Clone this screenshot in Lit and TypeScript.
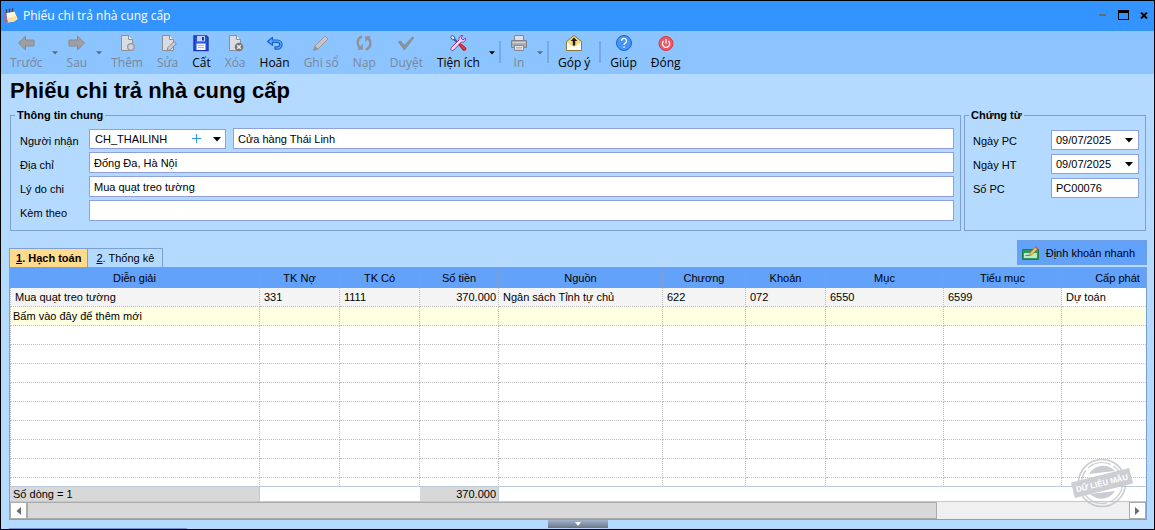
import { LitElement, html, svg, css, nothing, TemplateResult } from "lit";
import { customElement, state } from "lit/decorators.js";
import { classMap } from "lit/directives/class-map.js";

const icons: Record<string, TemplateResult> = {
  back: svg`<path d="M1.500 9 8.500 2V6H17v6H8.500v4z" fill="#9f9fa2" stroke="#898a8f"/>`,
  next: svg`<path d="M16.500 9 9.500 2V6H1v6H9.500v4z" fill="#9f9fa2" stroke="#898a8f"/>`,
  add: svg`<path d="M3.500 1.500h7l4 4v11h-11z" fill="#d9dde3" stroke="#8c8f94"/><path d="M10.500 1.500v4h4" fill="#eef0f3" stroke="#8c8f94"/><circle cx="13" cy="13" r="3.300" fill="#cfd2d6" stroke="#94979c" stroke-width="1.300"/>`,
  edit: svg`<path d="M3.500 1.500h7l4 4v11h-11z" fill="#d9dde3" stroke="#8c8f94"/><path d="M10.500 1.500v4h4" fill="#eef0f3" stroke="#8c8f94"/><path d="m8 17 1-3.500 6-6 2.300 2.300-6 6z" fill="#c9ccd1" stroke="#85888e"/>`,
  save: svg`<path d="M2 2h12.500l1.500 1.500v13H2z" fill="#2452e6" stroke="#1a37b0" stroke-width="1.400"/><path d="M5 2h8v5.500H5z" fill="#c3cdf0"/><path d="M10 3h2v3.500h-2z" fill="#1b38a8"/><path d="M4.500 9.500h9V16h-9z" fill="#f4f5fb"/><path d="M6 11.500h6M6 13.500h6" stroke="#b1b8d4"/>`,
  remove: svg`<path d="M3.500 1.500h7l4 4v11h-11z" fill="#d9dde3" stroke="#8c8f94"/><path d="M10.500 1.500v4h4" fill="#eef0f3" stroke="#8c8f94"/><circle cx="13" cy="13" r="4.300" fill="#77797e"/><path d="m11.200 11.200 3.600 3.600m0-3.600-3.600 3.600" stroke="#eee" stroke-width="1.500"/>`,
  undo: svg`<path d="M1.500 7.500 6.500 3.500v2.500h5a4.600 4.600 0 0 1 0 9.200H9v-2.400h2.500a2.200 2.200 0 0 0 0-4.400h-5v3z" fill="#60a9fb" stroke="#1762cd" stroke-width="1.200" stroke-linejoin="round"/>`,
  pencil: svg`<path d="M1.500 16.500 3 12 13 2l3 3L6 15z" fill="#c3c6ca" stroke="#96999e"/><path d="m1.500 16.500 1.500-4.500 3 3z" fill="#8c8f94"/>`,
  reload: svg`<path d="M7.200 2.500C4 3.500 2.500 6 2.700 9.200c.1 2 .8 3.500 2.300 4.800" fill="none" stroke="#8f9297" stroke-width="2.400"/><path d="M2 15.800h5.800V10z" fill="#8f9297"/><path d="M10.800 15.500c3.200-1 4.700-3.500 4.500-6.700-.1-2-.8-3.500-2.300-4.800" fill="none" stroke="#8f9297" stroke-width="2.400"/><path d="M16 2.200h-5.800V8z" fill="#8f9297"/>`,
  approve: svg`<path d="m1.500 8 2-1 3.800 4.500L15.500 3l1.200.8L7.500 16z" fill="#8f9297" stroke="#82858b" stroke-width=".8"/>`,
  tools: svg`<path d="m3 3 7 7" stroke="#3155b5" stroke-width="2"/><path d="m1.500 3 1.800-1.500 2 1 .6 2.700-2.300.8z" fill="#dfe6fa" stroke="#3155b5"/><path d="m2.200 13.800 8-8c-.7-2.300 1-4.600 3.600-4.300L12 4l1.800 2L16.500 4c.7 2.600-1.600 4.700-4 4l-7.900 8.200c-1.600 1.300-3.700-.8-2.400-2.400z" fill="#f1d6f6" stroke="#8a3a9e"/><path d="m9.800 10.800 1.600-1.300 5.200 4.300c1 1.700-.6 3.300-2.300 2.500z" fill="#ec3434" stroke="#a31a24"/>`,
  print: svg`<path d="M4.500 6V1.500h9V6" fill="#dde0e5" stroke="#85888e"/><path d="M1.500 6.500h15v7h-15z" fill="#a9acb2" stroke="#7f8288"/><path d="M2.500 8.500h13" stroke="#d5d7db"/><path d="M4.500 11.500h9v5h-9z" fill="#e6e8ec" stroke="#85888e"/><path d="M6 13.500h6M6 15h6" stroke="#9a9da3" stroke-width=".7"/>`,
  mail: svg`<path d="m1.500 7.500 7.500-6 7.500 6v9h-15z" fill="#f5dc7f" stroke="#8d7a35"/><path d="m2 8.500 7 4.500 7-4.500v7.500H2z" fill="#fffdf4"/><path d="M9 3.500 5.700 7h2.100v4.500h2.400V7h2.100z" fill="#1d1d1d"/>`,
  help: svg`<circle cx="9" cy="9" r="7.500" fill="#4594f7" stroke="#1c65cf"/><path d="M6.500 7a2.500 2.500 0 1 1 3.600 2.200c-.8.500-1.100.9-1.100 1.800M9 12.500V14" fill="none" stroke="#fff" stroke-width="1.300"/>`,
  power: svg`<circle cx="9" cy="9.500" r="7" fill="#f25560" stroke="#d83c4a"/><path d="M6.600 7a3.600 3.600 0 1 0 4.800 0M9 5v4.500" fill="none" stroke="#fff" stroke-width="1.300"/>`,
};

interface Tool {
  icon?: string;
  label?: string;
  disabled?: boolean;
  menu?: boolean;
  separator?: boolean;
}

const tools: Tool[] = [
  { icon: "back", label: "Trước", disabled: true, menu: true },
  { icon: "next", label: "Sau", disabled: true, menu: true },
  { icon: "add", label: "Thêm", disabled: true },
  { icon: "edit", label: "Sửa", disabled: true },
  { icon: "save", label: "Cất" },
  { icon: "remove", label: "Xóa", disabled: true },
  { icon: "undo", label: "Hoãn" },
  { icon: "pencil", label: "Ghi sổ", disabled: true },
  { icon: "reload", label: "Nạp", disabled: true },
  { icon: "approve", label: "Duyệt", disabled: true },
  { icon: "tools", label: "Tiện ích", menu: true },
  { separator: true },
  { icon: "print", label: "In", disabled: true, menu: true },
  { separator: true },
  { icon: "mail", label: "Góp ý" },
  { separator: true },
  { icon: "help", label: "Giúp" },
  { icon: "power", label: "Đóng" },
];

const caret = html`<svg class="caret" width="8" height="5" viewBox="0 0 8 5" aria-hidden="true"><path d="M0 0h8L4 4.500z" fill="currentColor"/></svg>`;

@customElement("tool-bar")
class ToolBar extends LitElement {
  static styles = css`
    :host {
      display: flex;
      align-items: stretch;
      height: 43px;
      padding-left: 2px;
      background: #8bc4ff;
      font: 12px/16px "Open Sans", "Noto Sans", sans-serif;
      overflow: hidden;
    }
    button {
      display: flex;
      flex-direction: column;
      flex: none;
      align-items: center;
      border: 0;
      background: none;
      font: inherit;
      color: #000;
      padding: 3px 7px 0;
      gap: 3px;
      white-space: nowrap;
    }
    button.disabled { color: #7c8797; }
    button.menu {
      justify-content: center;
      padding: 0;
      width: 10px;
    }
    button.menu.disabled { color: #5f6b7c; }
    button.menu svg { width: 6px; height: 4px; }
    .sep {
      flex: none;
      width: 2px;
      margin: 10px 2px 11px;
      background: #78a9e3;
    }
  `;
  render() {
    return tools.map((t) =>
      t.separator
        ? html`<span class="sep" role="separator"></span>`
        : html`<button class=${classMap({ disabled: !!t.disabled })} ?disabled=${t.disabled}>
              <svg width="18" height="18" viewBox="0 0 18 18" aria-hidden="true">${icons[t.icon!]}</svg>
              <span>${t.label}</span>
            </button>${t.menu
              ? html`<button class=${classMap({ menu: true, disabled: !!t.disabled })} ?disabled=${t.disabled} aria-label="${t.label} - menu">${caret}</button>`
              : nothing}`
    );
  }
}

interface Column {
  title: string;
  width: number;
  value: string;
  numeric?: boolean;
  total?: string;
}

const columns: Column[] = [
  { title: "Diễn giải", width: 250, value: "Mua quạt treo tường", total: "Số dòng = 1" },
  { title: "TK Nợ", width: 80, value: "331" },
  { title: "TK Có", width: 80, value: "1111" },
  { title: "Số tiền", width: 79, value: "370.000", numeric: true, total: "370.000" },
  { title: "Nguồn", width: 164, value: "Ngân sách Tỉnh tự chủ" },
  { title: "Chương", width: 83, value: "622" },
  { title: "Khoản", width: 80, value: "072" },
  { title: "Mục", width: 118, value: "6550" },
  { title: "Tiểu mục", width: 118, value: "6599" },
  { title: "Cấp phát", width: 112, value: "Dự toán" },
];

@customElement("entry-grid")
class EntryGrid extends LitElement {
  static styles = css`
    :host {
      display: flex;
      flex-direction: column;
      position: relative;
      min-height: 0;
      border: 1px solid #7d9fd2;
      background: #fff;
      overflow: hidden;
    }
    .body { flex: 1; min-height: 0; overflow: hidden; }
    table {
      table-layout: fixed;
      width: 1164px;
      border-collapse: separate;
      border-spacing: 0;
      line-height: 14px;
    }
    th, td { box-sizing: border-box; white-space: nowrap; overflow: hidden; }
    th {
      height: 20px;
      padding: 0;
      font-weight: normal;
      background: #62a2fb;
      border-right: 1px solid #7d9fd2;
    }
    td {
      height: 19px;
      padding: 0 2px 0 4px;
      border: 0 dotted #bfbfbf;
      border-width: 0 1px 1px 0;
    }
    td:first-child { border-left-width: 1px; }
    .num { text-align: right; }
    .data td { background: #f4f4f4; }
    .data td:last-child { background: #fff; }
    .new td { background: #ffffe1; }
    .new td:first-child { padding-left: 2px; }
    .summary { border-top: 1px solid #b9cadd; border-bottom: 1px solid #b9cadd; overflow: hidden; }
    .summary td { height: 14px; border: 0; line-height: 14px; padding-left: 3px; }
    .summary td.total { background: #d8d8d8; border: 0 solid #b9cadd; border-right-width: 1px; }
    .scroll { display: flex; height: 17px; background: #f0f0f0; }
    .scroll button {
      box-sizing: border-box;
      width: 17px;
      height: 17px;
      padding: 0;
      display: grid;
      place-items: center;
      border: 1px solid #ababab;
      background: #fff;
      color: #6b6b6b;
    }
    .track { flex: 1; display: flex; }
    .thumb { box-sizing: border-box; width: 82.6%; border: 1px solid #ababab; background: #d8d8d8; }
    .stamp { position: absolute; right: 12px; bottom: 10px; }
    .stamp text { font: bold 8px "Liberation Sans", Arial, sans-serif; }
  `;
  private cols() {
    return html`<colgroup>${columns.map((c) => html`<col style="width:${c.width}px">`)}</colgroup>`;
  }
  render() {
    return html`
      <div class="body">
        <table>
          ${this.cols()}
          <thead><tr>${columns.map((c) => html`<th scope="col">${c.title}</th>`)}</tr></thead>
          <tbody>
            <tr class="data">${columns.map((c) => html`<td class=${classMap({ num: !!c.numeric })}>${c.value}</td>`)}</tr>
            <tr class="new">${columns.map((_, i) => html`<td>${i ? nothing : "Bấm vào đây để thêm mới"}</td>`)}</tr>
            ${Array.from({ length: 40 }, () => html`<tr>${columns.map(() => html`<td></td>`)}</tr>`)}
          </tbody>
        </table>
      </div>
      <div class="summary">
        <table>
          ${this.cols()}
          <tbody><tr>${columns.map((c) => html`<td class=${classMap({ num: !!c.numeric, total: !!c.total })}>${c.total ?? nothing}</td>`)}</tr></tbody>
        </table>
      </div>
      <div class="scroll">
        <button aria-label="Cuộn trái"><svg width="5" height="8" viewBox="0 0 5 8"><path d="M5 0v8L.500 4z" fill="currentColor"/></svg></button>
        <div class="track"><div class="thumb"></div></div>
        <button aria-label="Cuộn phải"><svg width="5" height="8" viewBox="0 0 5 8"><path d="M0 0v8l4.500-4z" fill="currentColor"/></svg></button>
      </div>
      <svg class="stamp" width="64" height="52" viewBox="0 0 64 52">
        <g opacity=".75" fill="none" stroke="#b9bcc2">
          <circle cx="32" cy="26" r="23.500" stroke-width="1.600"/>
          <circle cx="32" cy="26" r="20.500" stroke-width="1.200" stroke-dasharray="24 3"/>
          <path d="M19 17a16 16 0 0 1 26-3z" fill="#b9bcc2" stroke="none"/>
          <path d="M20 37a16 16 0 0 0 25-3z" fill="#b9bcc2" stroke="none"/>
        </g>
        <g transform="rotate(-14 32 26)">
          <rect x="2" y="18" width="60" height="16" fill="#cdced2"/>
          <text x="32" y="29" text-anchor="middle" fill="#fff">DỮ LIỆU MẪU</text>
        </g>
      </svg>
    `;
  }
}

@customElement("app-root")
class AppRoot extends LitElement {
  @state() private tab = 0;

  static styles = css`
    :host {
      display: flex;
      flex-direction: column;
      box-sizing: border-box;
      height: 100vh;
      min-height: 400px;
      border: 1px solid #000;
      background: #b5daff;
      color: #000;
      font: 11px/14px "Liberation Sans", Arial, sans-serif;
      overflow: hidden;
    }
    button, input, select { font: inherit; color: inherit; box-sizing: border-box; margin: 0; }
    button { padding: 0; border: 0; background: none; }
    .titlebar {
      display: flex;
      align-items: center;
      gap: 5px;
      height: 30px;
      padding: 0 4px 0 2px;
      background: #3494ff;
      color: #fff;
      font: 12px/16px "Open Sans", "Noto Sans", sans-serif;
    }
    .titlebar .name { flex: 1; }
    .titlebar button { display: grid; place-items: center; width: 12px; height: 12px; }
    .controls { display: flex; gap: 9px; padding-bottom: 2px; }
    h1 { margin: 0; padding: 4px 9px 0; font-size: 22px; line-height: 26px; height: 30px; }
    .panels { display: flex; gap: 3px; padding: 0 8px 0 9px; }
    fieldset {
      box-sizing: border-box;
      min-width: 0;
      margin: 0;
      padding: 0;
      border: 1px solid #7d9fd2;
    }
    legend { margin-left: 4px; padding: 0 2px; font-weight: bold; line-height: 14px; }
    .general { flex: 1; }
    .voucher { width: 182px; }
    .general .rows { display: grid; grid-template-columns: 69px 1fr; row-gap: 3px; padding: 6px 6px 9px 9px; }
    .voucher .rows { display: grid; grid-template-columns: 78px 1fr; row-gap: 4px; padding: 8px 6px 0 8px; }
    label { align-self: center; padding-top: 4px; white-space: nowrap; }
    .voucher label { padding-top: 2px; }
    .box, .general input {
      height: 21px;
      width: 100%;
      min-width: 0;
      padding: 0 4px;
      border: 1px solid #8fa0e0;
      border-radius: 0;
      background: #fff;
      outline: none;
    }
    .pair { display: flex; gap: 7px; align-items: flex-end; }
    .combo { position: relative; flex: none; width: 137px; height: 20px; }
    .combo select {
      appearance: none;
      width: 100%;
      height: 20px;
      padding: 0 36px 0 5px;
      border: 1px solid #8fa0e0;
      border-radius: 0;
      background: #fff;
      outline: none;
    }
    .combo .caret { position: absolute; right: 5px; top: 8px; pointer-events: none; }
    .combo .plus { position: absolute; right: 24px; top: 5px; width: 10px; height: 10px; display: grid; }
    .date { display: flex; box-sizing: border-box; align-items: center; }
    .voucher .date { padding: 0 5px 0 0; }
    .date input { flex: 1; min-width: 0; width: 0; height: 18px; border: 0; padding: 0 4px; background: none; outline: none; }
    .date button { display: grid; place-items: center; }
    .voucher .box { height: 20px; }
    .bar { display: flex; align-items: flex-end; justify-content: space-between; padding: 9px 7px 0 8px; }
    .tabs { display: flex; }
    .tabs button {
      height: 19px;
      padding: 0 8px;
      border: 1px solid #7d9fd2;
      border-bottom: 0;
      white-space: nowrap;
    }
    .tabs button + button { border-left: 0; }
    .tabs button.active { background: #ffdb8b; font-weight: bold; padding: 0 6px; }
    button.quick {
      display: flex;
      align-items: center;
      gap: 7px;
      height: 25px;
      margin-bottom: 2px;
      padding: 0 11px 0 4px;
      border: 1px solid #6d9fe6;
      background: #62a2fb;
    }
    entry-grid { flex: 1; margin: 0 7px 0 8px; }
    footer { display: flex; justify-content: center; position: relative; height: 9px; }
    .handle {
      display: grid;
      place-items: center;
      width: 60px;
      height: 8px;
      background: linear-gradient(#9fb3d2, #6f7580);
    }
    .edge { position: absolute; left: 8px; bottom: 0; width: 178px; height: 1px; background: #6f93cf; }
  `;

  render() {
    return html`
      <header class="titlebar">
        <svg width="15" height="16" viewBox="0 0 15 16" aria-hidden="true">
          <path d="m1.500 3 9-2 4 10-4 3-8 1z" fill="#4f7fd0"/>
          <path d="m3.500 5 8-1.500 3 7.500-3.500 2.500-6.500 1z" fill="#fdf6da"/>
          <path d="m4 10 9.500-2 1 3-3.500 2.500-6.500 1z" fill="#ffe09a"/>
          <path d="M3.500 1v4M6.500.500v4M9.500 0v4" stroke="#39465f" stroke-width="1.200"/>
          <path d="M1.500 3 .500 12l2.500 3 2-1z" fill="#8c6fa8"/>
        </svg>
        <span class="name">Phiếu chi trả nhà cung cấp</span>
        <div class="controls">
          <button aria-label="Thu nhỏ"><svg width="7" height="2"><path d="M0 0h7v2H0z" fill="#6a6a6a"/></svg></button>
          <button aria-label="Phóng to"><svg width="11" height="10"><path d="M0 0h11v10H0zM1 3v6h9V3z" fill="#000" fill-rule="evenodd"/></svg></button>
          <button aria-label="Đóng"><svg width="8" height="7" viewBox="0 0 8 7"><path d="m1 .500 6 6m0-6-6 6" stroke="#000" stroke-width="2"/></svg></button>
        </div>
      </header>
      <tool-bar></tool-bar>
      <h1>Phiếu chi trả nhà cung cấp</h1>
      <div class="panels">
        <fieldset class="general">
          <legend>Thông tin chung</legend>
          <div class="rows">
            <label for="payee">Người nhận</label>
            <div class="pair">
              <div class="combo">
                <select id="payee"><option>CH_THAILINH</option></select>
                <button class="plus" aria-label="Thêm người nhận"><svg width="9" height="9"><path d="M4.500 0v9M0 4.500h9" stroke="#2f97e6"/></svg></button>
                ${caret}
              </div>
              <input aria-label="Tên người nhận" value="Cửa hàng Thái Linh">
            </div>
            <label for="address">Địa chỉ</label>
            <input id="address" value="Đống Đa, Hà Nội">
            <label for="reason">Lý do chi</label>
            <input id="reason" value="Mua quạt treo tường">
            <label for="attach">Kèm theo</label>
            <input id="attach">
          </div>
        </fieldset>
        <fieldset class="voucher">
          <legend>Chứng từ</legend>
          <div class="rows">
            <label for="datePc">Ngày PC</label>
            <div class="box date"><input id="datePc" value="09/07/2025"><button aria-label="Chọn ngày PC">${caret}</button></div>
            <label for="dateHt">Ngày HT</label>
            <div class="box date"><input id="dateHt" value="09/07/2025"><button aria-label="Chọn ngày HT">${caret}</button></div>
            <label for="number">Số PC</label>
            <input class="box" id="number" value="PC00076">
          </div>
        </fieldset>
      </div>
      <div class="bar">
        <div class="tabs" role="tablist">
          ${["Hạch toán", "Thống kê"].map(
            (name, i) => html`<button role="tab" aria-selected=${this.tab === i} class=${classMap({ active: this.tab === i })} @click=${() => (this.tab = i)}><u>${i + 1}</u>. ${name}</button>`
          )}
        </div>
        <button class="quick">
          <svg width="17" height="14" viewBox="0 0 17 14" aria-hidden="true">
            <path d="M.500 3.500h16v10H.500z" fill="#2e9a60" stroke="#1f7d4b"/>
            <path d="M2 7h13v5H2z" fill="#bfe8c4"/>
            <path d="M3.500 9.500h4" stroke="#2e9a60"/>
            <path d="m7.500 9.500.8-3 5.400-5.700 2 2-5.500 5.800z" fill="#f6c45c" stroke="#8f6a2a" stroke-width=".6"/>
            <path d="m13 1.500 1-1.200 2.300 2-1.200 1.200z" fill="#e2553f"/>
          </svg>
          <span>Định khoản nhanh</span>
        </button>
      </div>
      <entry-grid></entry-grid>
      <footer>
        <button class="handle" aria-label="Thu gọn"><svg width="6" height="4" viewBox="0 0 6 4"><path d="M0 0h6L3 4z" fill="#fff"/></svg></button>
        <span class="edge"></span>
      </footer>
    `;
  }
}
